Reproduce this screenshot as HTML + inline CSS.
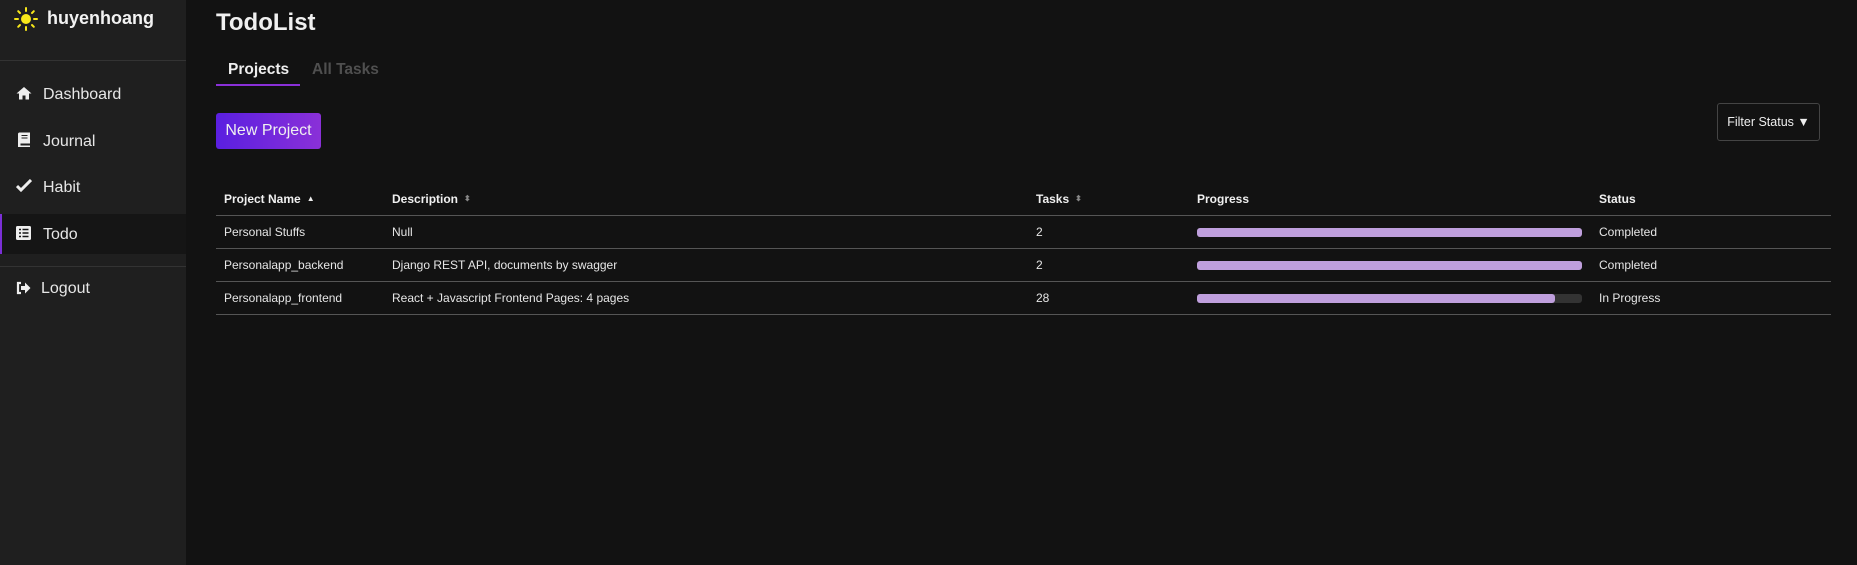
<!DOCTYPE html>
<html><head><meta charset="utf-8"><style>
*{margin:0;padding:0;box-sizing:border-box}
body{width:1857px;height:565px;background:#121212;font-family:"Liberation Sans",Arial,sans-serif;color:#fff;position:relative;overflow:hidden}
.side{position:absolute;left:0;top:0;width:186px;height:565px;background:#1f1f1f}
.abs{position:absolute}
.brand{left:47px;top:8px;font-size:18px;font-weight:bold;color:#f2f2f2}
.hr{left:0;width:186px;height:1px;background:#333}
.nav{left:43px;font-size:16px;color:#e6e6e6;line-height:20px}
.ico{left:16px}
.active{left:0;top:214px;width:186px;height:40px;background:#151515;border-left:2px solid #7b2fd6}
.title{left:216px;top:9px;font-size:24px;font-weight:bold;color:#f0f0f0}
.tab{top:61px;font-size:15.5px;font-weight:bold}
.btn{left:216px;top:113px;width:105px;height:36px;border-radius:3px;background:linear-gradient(90deg,#5a1fe0,#8a30d8);color:#f0f0f0;font-size:16px;line-height:36px;text-align:center}
.filter{left:1717px;top:103px;width:103px;height:38px;border:1px solid #444;border-radius:3px;font-size:12.5px;line-height:36px;text-align:center;color:#eee}
.th{top:192px;font-size:12px;font-weight:bold;color:#f0f0f0}
.td{font-size:12px;color:#e6e6e6}
.line{left:216px;width:1615px;height:1px;background:#555}
.bar{left:1197px;width:385px;height:9px;border-radius:3px;background:#333}
.bar i{display:block;height:9px;border-radius:3px;background:#bf9fdd}
.sort{font-size:8px;color:#888;margin-left:6px;vertical-align:2px}
</style></head><body>
<div class="side"></div>
<svg class="abs" style="left:14px;top:7px" width="24" height="24" viewBox="0 0 24 24"><circle cx="12" cy="12" r="5" fill="#f7e71a"/><g stroke="#f7e71a" stroke-width="2" stroke-linecap="round"><line x1="12" y1="1" x2="12" y2="4"/><line x1="12" y1="20" x2="12" y2="23"/><line x1="1" y1="12" x2="4" y2="12"/><line x1="20" y1="12" x2="23" y2="12"/><line x1="4.2" y1="4.2" x2="6" y2="6"/><line x1="18" y1="18" x2="19.8" y2="19.8"/><line x1="4.2" y1="19.8" x2="6" y2="18"/><line x1="18" y1="6" x2="19.8" y2="4.2"/></g></svg>
<div class="abs brand">huyenhoang</div>
<div class="abs hr" style="top:60px"></div>
<div class="abs active"></div>
<div class="abs hr" style="top:266px"></div>
<svg class="abs ico" style="top:86px" width="16" height="14" viewBox="0 0 16 14"><path d="M8 1L0.5 7.5h2.5v6h3.5V9.5h3v4h3.5v-6h2.5z" fill="#eee"/></svg>
<div class="abs nav" style="top:85px">Dashboard</div>
<svg class="abs ico" style="top:132px;left:17px" width="14" height="16" viewBox="0 0 14 16"><path d="M2 0.5h11v11H3.5v2H13V15H1V1.5z" fill="#eee"/><path d="M4.5 3.5h6M4.5 6h6" stroke="#1f1f1f" stroke-width="1"/></svg>
<div class="abs nav" style="top:132px">Journal</div>
<svg class="abs ico" style="top:179px" width="16" height="13" viewBox="0 0 16 13"><path d="M1 7l4 4 10-10" stroke="#eee" stroke-width="3" fill="none"/></svg>
<div class="abs nav" style="top:178px">Habit</div>
<svg class="abs ico" style="top:226px" width="15" height="14" viewBox="0 0 15 14"><rect x="0" y="0" width="15" height="14" rx="1.5" fill="#eee"/><path d="M3 3.5h2M3 7h2M3 10.5h2M6.5 3.5h6M6.5 7h6M6.5 10.5h6" stroke="#151515" stroke-width="1.6"/></svg>
<div class="abs nav" style="top:225px">Todo</div>
<svg class="abs ico" style="top:281px" width="15" height="14" viewBox="0 0 15 14"><path d="M5 2H2v10h3" stroke="#eee" stroke-width="2.2" fill="none"/><path d="M5 5h4V1.5L14.5 7 9 12.5V9H5z" fill="#eee"/></svg>
<div class="abs nav" style="top:279px;left:41px">Logout</div>

<div class="abs title">TodoList</div>
<div class="abs tab" style="left:228px;color:#eee">Projects</div>
<div class="abs" style="left:216px;top:84px;width:84px;height:2px;background:#8a30d8"></div>
<div class="abs tab" style="left:312px;color:#4f4f4f">All Tasks</div>
<div class="abs btn">New Project</div>
<div class="abs filter">Filter Status ▼</div>

<div class="abs th" style="left:224px">Project Name<span class="sort" style="color:#eee">▲</span></div>
<div class="abs th" style="left:392px">Description<span class="sort">⬍</span></div>
<div class="abs th" style="left:1036px">Tasks<span class="sort">⬍</span></div>
<div class="abs th" style="left:1197px">Progress</div>
<div class="abs th" style="left:1599px">Status</div>
<div class="abs line" style="top:215px"></div>
<div class="abs line" style="top:248px"></div>
<div class="abs line" style="top:281px"></div>
<div class="abs line" style="top:314px"></div>

<div class="abs td" style="left:224px;top:225px">Personal Stuffs</div>
<div class="abs td" style="left:392px;top:225px">Null</div>
<div class="abs td" style="left:1036px;top:225px">2</div>
<div class="abs bar" style="top:228px"><i style="width:100%"></i></div>
<div class="abs td" style="left:1599px;top:225px">Completed</div>

<div class="abs td" style="left:224px;top:258px">Personalapp_backend</div>
<div class="abs td" style="left:392px;top:258px">Django REST API, documents by swagger</div>
<div class="abs td" style="left:1036px;top:258px">2</div>
<div class="abs bar" style="top:261px"><i style="width:100%"></i></div>
<div class="abs td" style="left:1599px;top:258px">Completed</div>

<div class="abs td" style="left:224px;top:291px">Personalapp_frontend</div>
<div class="abs td" style="left:392px;top:291px">React + Javascript Frontend Pages: 4 pages</div>
<div class="abs td" style="left:1036px;top:291px">28</div>
<div class="abs bar" style="top:294px"><i style="width:358px"></i></div>
<div class="abs td" style="left:1599px;top:291px">In Progress</div>
</body></html>
